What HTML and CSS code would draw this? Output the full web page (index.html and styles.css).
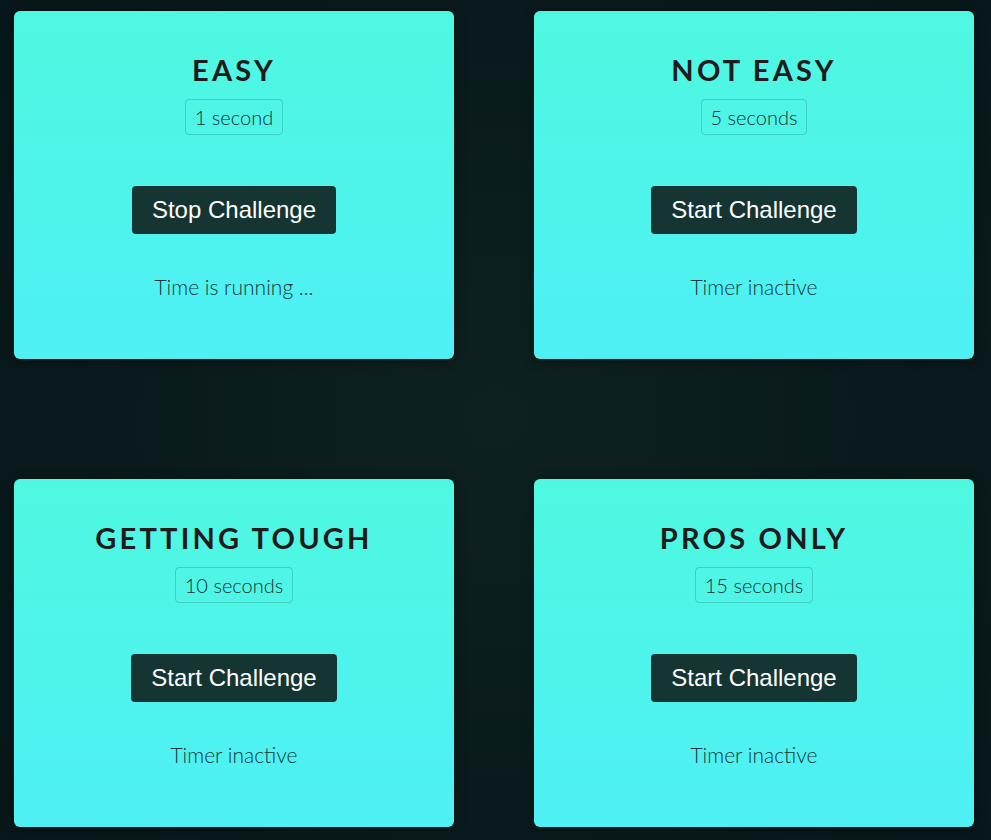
FILE: index.html
```html
<!DOCTYPE html>
<html lang="en">
<head>
<meta charset="utf-8">
<title>Challenges</title>
<link rel="stylesheet" href="styles.css">
</head>
<body>
<main class="challenges">
  <section class="card">
    <h2 class="card-title">Easy</h2>
    <p class="badge">1 second</p>
    <button class="btn">Stop Challenge</button>
    <p class="status">Time is running ...</p>
  </section>
  <section class="card">
    <h2 class="card-title">Not Easy</h2>
    <p class="badge">5 seconds</p>
    <button class="btn">Start Challenge</button>
    <p class="status">Timer inactive</p>
  </section>
  <section class="card">
    <h2 class="card-title">Getting Tough</h2>
    <p class="badge">10 seconds</p>
    <button class="btn">Start Challenge</button>
    <p class="status">Timer inactive</p>
  </section>
  <section class="card">
    <h2 class="card-title">Pros Only</h2>
    <p class="badge">15 seconds</p>
    <button class="btn">Start Challenge</button>
    <p class="status">Timer inactive</p>
  </section>
</main>
</body>
</html>
```
FILE: styles.css
```css
html, body {
  margin: 0;
  height: 100%;
}
body {
  background: radial-gradient(circle at 50% 50%, #0e201f 0%, #0a1a1c 60%, #08171a 100%);
  font-family: Lato, "Noto Sans", sans-serif;
}
.challenges {
  display: grid;
  grid-template-columns: 440px 440px;
  grid-auto-rows: 348px;
  column-gap: 80px;
  row-gap: 120px;
  padding: 11px 14px;
}
.card {
  display: flex;
  flex-direction: column;
  align-items: center;
  background: linear-gradient(180deg, #4ef8e0 0%, #4ef0f5 100%);
  border-radius: 6px;
  box-shadow: 0 2px 12px rgba(0, 0, 0, 0.35);
  padding-top: 42px;
}
.card-title {
  margin: 0;
  font-size: 29px;
  line-height: 34px;
  font-weight: 700;
  text-transform: uppercase;
  letter-spacing: 3.2px;
  color: #221b1b;
}
.badge {
  margin: 12px 0 0;
  padding: 0 9px;
  font-size: 20px;
  line-height: 34px;
  font-weight: 300;
  color: #1a2e2e;
  border: 1px solid rgba(20, 110, 100, 0.28);
  border-radius: 4px;
}
.btn {
  margin-top: 51px;
  padding: 10px 20px;
  font-family: "Liberation Sans", Arial, sans-serif;
  font-size: 24px;
  line-height: 28px;
  color: #ffffff;
  background: #153532;
  border: none;
  border-radius: 4px;
}
.status {
  margin: 41px 0 0;
  font-size: 21px;
  line-height: 24px;
  font-weight: 300;
  color: #1a3636;
}
```
